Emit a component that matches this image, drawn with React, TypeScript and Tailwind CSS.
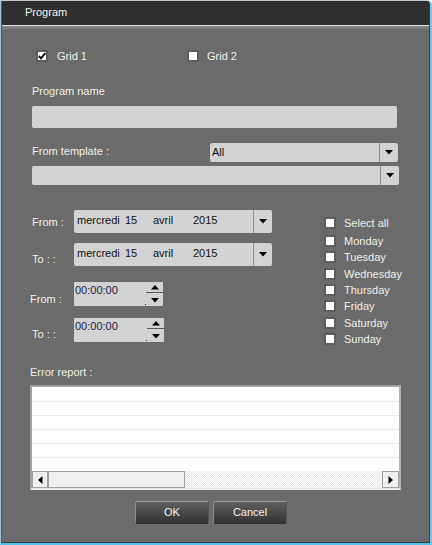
import React from 'react';

// -----------------------------------------------------------------------------
// SMALL PIECES
// -----------------------------------------------------------------------------

const DownArrow = () => (
    <svg width="8" height="5" viewBox="0 0 8 5"><polygon points="0,0 8,0 4,4.5" fill="#000" /></svg>
);

const CheckBox = ({ checked = false }: { checked?: boolean }) => (
    <div className="w-[12px] h-[12px] border-2 border-[#5c5c5c] bg-white flex items-center justify-center shrink-0">
        {checked && (
            <svg width="8" height="8" viewBox="0 0 8 8">
                <path d="M0.8 4 L3 6.4 L7.3 1" fill="none" stroke="#000" strokeWidth={1.9} />
            </svg>
        )}
    </div>
);

const ComboBox = ({ text, className }: { text?: React.ReactNode, className: string }) => (
    <div className={`flex bg-[#d3d3d3] rounded-[2px] text-[#111] ${className}`}>
        <div className="flex-1 flex items-center pl-[2px] overflow-hidden">{text}</div>
        <div className="w-px bg-[#8e8e8e]" />
        <div className="w-[18px] flex items-center justify-center"><DownArrow /></div>
    </div>
);

const DateText = () => (
    <div className="flex pl-[1px] pb-[3px] whitespace-nowrap">
        <span className="w-[48px]">mercredi</span>
        <span className="w-[28px]">15</span>
        <span className="w-[40px]">avril</span>
        <span>2015</span>
    </div>
);

const TimeBox = ({ className }: { className: string }) => (
    <div className={`relative flex bg-[#d3d3d3] rounded-[1px] ${className}`}>
        <div className="flex-1 pl-[1px] pt-[2px] text-[#1a1a44]">00:00:00</div>
        <div className="w-[17px] flex flex-col items-center pt-[3px]">
            <svg width="8" height="5" viewBox="0 0 8 5"><polygon points="4,0 8,4.5 0,4.5" fill="#000" /></svg>
            <div className="w-[17px] h-px bg-[#555] mt-[2px] mb-[5px]" />
            <svg width="8" height="5" viewBox="0 0 8 5"><polygon points="0,0 8,0 4,4.5" fill="#000" /></svg>
        </div>
        <div className="absolute right-[17px] bottom-[1px] w-px h-px bg-[#333]" />
    </div>
);

const Label = ({ children, className = '' }: { children: React.ReactNode, className?: string }) => (
    <div className={`text-[#f1f1ea] leading-[14px] whitespace-nowrap ${className}`}>{children}</div>
);

const DAYS = ['Monday', 'Tuesday', 'Wednesday', 'Thursday', 'Friday', 'Saturday', 'Sunday'];

// -----------------------------------------------------------------------------
// MAIN
// -----------------------------------------------------------------------------

export default function App() {
    return (
        <div className="w-[432px] h-[545px] overflow-hidden rounded-tr-[5px] border-t border-l border-r-2 border-b-2 border-t-[#c2c6ca] border-l-[#a2c4d6] border-r-[#6ecaec] border-b-[#4ec0ea] font-['Liberation_Sans',Arial,sans-serif] text-[11px] leading-[13px]">
            <div className="h-full flex flex-col bg-[#6b6b6b] border-l border-r border-b border-l-[#575757] border-r-[#3c3c3c] border-b-[#3c3c3c]">
                {/* Title bar */}
                <div className="h-[24px] bg-[#2f2f2f] flex items-center pl-[23px] pb-[1px] text-[#f3f1e4]">Program</div>
                <div className="h-px bg-[#e4e4e4]" />
                <div className="h-[4px] bg-gradient-to-b from-[#8a8a8a] to-[#6e6e6e]" />

                {/* Grids */}
                <div className="flex items-center h-[12px] mt-[20px] ml-[34px]">
                    <div className="w-[151px] flex items-center">
                        <CheckBox checked />
                        <Label className="ml-[9px]">Grid 1</Label>
                    </div>
                    <CheckBox />
                    <Label className="ml-[8px]">Grid 2</Label>
                </div>

                {/* Program name */}
                <Label className="mt-[22px] ml-[30px]">Program name</Label>
                <div className="mt-[8px] ml-[30px] w-[365px] h-[22px] bg-[#d3d3d3] rounded-[2px]" />

                {/* Template */}
                <div className="flex mt-[15px] ml-[30px] h-[19px]">
                    <Label className="w-[178px] mt-[1px]">From template :</Label>
                    <ComboBox text="All" className="w-[188px] h-[19px]" />
                </div>
                <ComboBox className="mt-[4px] ml-[30px] w-[367px] h-[19px]" />

                {/* Dates, times and days */}
                <div className="flex mt-[25px]">
                    <div className="w-[292px] ml-[30px] flex flex-col">
                        <div className="flex items-center h-[23px]">
                            <Label className="w-[42px]">From :</Label>
                            <ComboBox text={<DateText />} className="w-[198px] h-[23px]" />
                        </div>
                        <div className="flex items-end h-[23px] mt-[10px]">
                            <Label className="w-[42px] leading-[13px]">To : :</Label>
                            <ComboBox text={<DateText />} className="w-[198px] h-[23px]" />
                        </div>
                        <div className="flex items-end h-[24px] mt-[16px]">
                            <Label className="w-[44px] -ml-[2px] leading-[13px]">From :</Label>
                            <TimeBox className="w-[89px] h-[24px]" />
                        </div>
                        <div className="flex items-end h-[24px] mt-[12px]">
                            <Label className="w-[42px] leading-[13px] pb-[1px]">To : :</Label>
                            <TimeBox className="w-[90px] h-[24px]" />
                        </div>
                    </div>
                    <div className="flex flex-col mt-[5px]">
                        <div className="flex items-center h-[16px]">
                            <CheckBox />
                            <Label className="ml-[8px] text-[#eef0f6]">Select all</Label>
                        </div>
                        <div className="flex flex-col mt-[2px]">
                            {DAYS.map(day => (
                                <div key={day} className="flex items-center h-[16.3px]">
                                    <CheckBox />
                                    <Label className="ml-[8px] text-[#eef0f6]">{day}</Label>
                                </div>
                            ))}
                        </div>
                    </div>
                </div>

                {/* Error report */}
                <Label className="mt-[18px] ml-[28px]">Error report :</Label>
                <div className="mt-[6px] ml-[28px] w-[371px] h-[105px] flex flex-col bg-white border-2 border-t-[#a2a2a2] border-l-[#a2a2a2] border-r-[#b4b4b4] border-b-[#ececec]">
                    <div className="mt-[1px]">
                        {[0, 1, 2, 3, 4].map(i => (
                            <div key={i} className="h-[14px] border-b border-[#ebebeb]" />
                        ))}
                    </div>
                    <div className="flex-1" />
                    <div className="h-[17px] flex">
                        <div className="w-[17px] flex items-center justify-center bg-[#f0f0f0] border border-r-2 border-[#a0a0a0]">
                            <svg width="5" height="8" viewBox="0 0 5 8"><polygon points="4.5,0 4.5,8 0,4" fill="#000" /></svg>
                        </div>
                        <div className="w-[136px] bg-[#f0f0f0] border-t border-b border-r border-[#a0a0a0]" />
                        <div className="flex-1 bg-[repeating-conic-gradient(#e9e9e9_0_25%,#fbfbfb_0_50%)] bg-[length:2px_2px]" />
                        <div className="w-[17px] flex items-center justify-center bg-[#f0f0f0] border border-[#a0a0a0]">
                            <svg width="5" height="8" viewBox="0 0 5 8"><polygon points="0.5,0 0.5,8 5,4" fill="#000" /></svg>
                        </div>
                    </div>
                </div>

                {/* Buttons */}
                <div className="flex gap-[4px] mt-[11px] ml-[133px]">
                    {['OK', 'Cancel'].map(label => (
                        <button
                            key={label}
                            className="w-[74px] h-[23px] rounded-[2px] border border-t-[#9a9a9a] border-l-[#8e8e8e] border-r-[#555] border-b-[#2e2e2e] bg-gradient-to-b from-[#606060] to-[#343434] text-[#f4f4f4] text-[11px] flex items-center justify-center"
                        >
                            {label}
                        </button>
                    ))}
                </div>
            </div>
        </div>
    );
}
